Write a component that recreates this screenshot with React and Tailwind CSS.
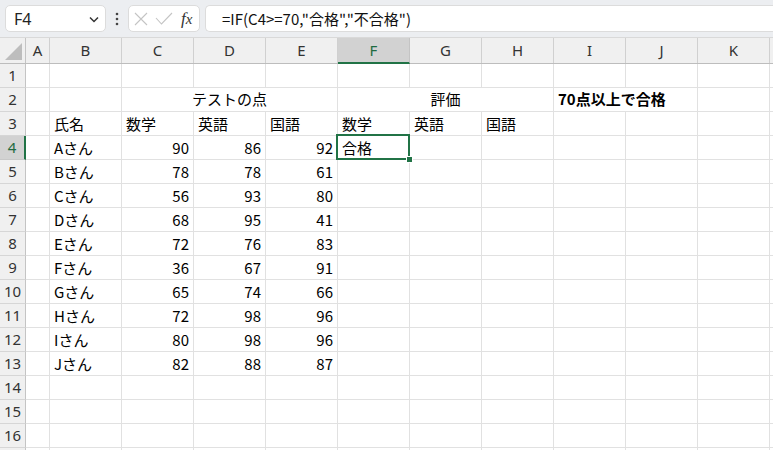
import React from "react";

const COLS = ["A", "B", "C", "D", "E", "F", "G", "H", "I", "J", "K"];
const W = { A: 24 };
const colW = (c) => (W[c] ? W[c] : 72);

const DATA = [
  ["Aさん", 90, 86, 92],
  ["Bさん", 78, 78, 61],
  ["Cさん", 56, 93, 80],
  ["Dさん", 68, 95, 41],
  ["Eさん", 72, 76, 83],
  ["Fさん", 36, 67, 91],
  ["Gさん", 65, 74, 66],
  ["Hさん", 72, 98, 96],
  ["Iさん", 80, 98, 96],
  ["Jさん", 82, 88, 87],
];

function cellsFor(r) {
  const m = {};
  if (r === 3) {
    m.B = "氏名"; m.C = "数学"; m.D = "英語"; m.E = "国語";
    m.F = "数学"; m.G = "英語"; m.H = "国語";
  }
  if (r >= 4 && r <= 13) {
    const d = DATA[r - 4];
    m.B = d[0]; m.C = d[1]; m.D = d[2]; m.E = d[3];
  }
  if (r === 4) m.F = "合格";
  return m;
}

function RowHeader({ n, selected }) {
  return (
    <div
      className={
        "w-[26px] shrink-0 h-full flex items-center justify-center border-b text-[15px] " +
        (selected
          ? "bg-[#d2d2d2] text-[#1e6b41] border-r-2 border-r-[#217346] border-b-[#c8c8c8]"
          : "bg-[#f0f0f0] text-[#333] border-r border-r-[#c4c4c4] border-b-[#d6d6d6]")
      }
    >
      {n <= 16 ? <span className="font-['Noto_Sans',sans-serif] leading-none">{n}</span> : null}
    </div>
  );
}

function Row({ r }) {
  const m = cellsFor(r);
  if (r === 2) {
    return (
      <div className="flex h-[24px]">
        <RowHeader n={r} />
        <div className="w-[24px] shrink-0 border-r border-b border-[#e1e1e1]" />
        <div className="w-[72px] shrink-0 border-r border-b border-[#e1e1e1]" />
        <div className="w-[216px] shrink-0 border-r border-b border-[#e1e1e1] flex items-center justify-center text-[15px]">
          テストの点
        </div>
        <div className="w-[216px] shrink-0 border-r border-b border-[#e1e1e1] flex items-center justify-center text-[15px]">
          評価
        </div>
        <div className="w-[144px] shrink-0 border-r border-b border-[#e1e1e1] flex items-center px-[4px] text-[15px] font-bold">
          70点以上で合格
        </div>
        <div className="w-[72px] shrink-0 border-r border-b border-[#e1e1e1]" />
        <div className="flex-1 border-b border-[#e1e1e1]" />
      </div>
    );
  }
  return (
    <div className="flex h-[24px]">
      <RowHeader n={r} selected={r === 4} />
      {COLS.map((c) => {
        const v = m[c];
        const isNum = typeof v === "number";
        const sel = r === 4 && c === "F";
        return (
          <div
            key={c}
            className={
              "shrink-0 border-r border-b border-[#e1e1e1] flex items-center px-[4px] text-[15px] " +
              (sel ? "relative z-10 " : "") +
              (isNum ? "justify-end" : "justify-start")
            }
            style={{ width: colW(c) }}
          >
            {v !== undefined ? <span className="leading-none whitespace-nowrap">{v}</span> : null}
            {sel ? (
              <>
                <div className="absolute left-[-2px] top-[-2px] right-[-1px] bottom-[-1px] border-2 border-[#217346]" />
                <div className="absolute right-[-4px] bottom-[-4px] w-[7px] h-[7px] bg-[#217346] border border-white" />
              </>
            ) : null}
          </div>
        );
      })}
      <div className="flex-1 border-b border-[#e1e1e1]" />
    </div>
  );
}

export default function App() {
  const rows = Array.from({ length: 17 }, (_, i) => i + 1);
  return (
    <div className="w-[773px] h-[450px] overflow-hidden bg-white text-black font-['Noto_Sans_CJK_JP',sans-serif]">
      {/* formula bar */}
      <div className="h-[38px] bg-[#eceef1] flex items-start pt-[5px] pl-[5px] gap-0 border-b border-[#d9d9d9]">
        <div className="w-[101px] h-[27px] bg-white rounded-[5px] border border-[#dcdcdc] flex items-center pl-[8px] pr-[6px]">
          <span className="text-[16px] text-[#222] font-['Noto_Sans',sans-serif] leading-none flex-1">F4</span>
          <svg width="10" height="7" viewBox="0 0 10 7" className="mt-[2px]">
            <path d="M1 1.5 L5 5.5 L9 1.5" fill="none" stroke="#333" strokeWidth="1.5" />
          </svg>
        </div>
        <div className="w-[22px] h-[27px] flex items-center justify-center">
          <svg width="4" height="14" viewBox="0 0 4 14">
            <circle cx="2" cy="2" r="1.3" fill="#444" />
            <circle cx="2" cy="7" r="1.3" fill="#444" />
            <circle cx="2" cy="12" r="1.3" fill="#444" />
          </svg>
        </div>
        <div className="w-[72px] h-[27px] bg-white rounded-[5px] border border-[#dcdcdc] flex items-center pl-[5px]">
          <svg width="14" height="14" viewBox="0 0 14 14">
            <path d="M1 1 L13 13 M13 1 L1 13" stroke="#c4c4c4" strokeWidth="1.1" fill="none" />
          </svg>
          <svg width="18" height="14" viewBox="0 0 18 14" className="ml-[7px]">
            <path d="M1 6 L6.5 12 L17 1" stroke="#c4c4c4" strokeWidth="1.1" fill="none" />
          </svg>
          <span className="ml-[8px] text-[17px] italic font-['Liberation_Serif',serif] text-[#333] leading-none">
            <span>f</span><span className="text-[15px]">x</span>
          </span>
        </div>
        <div className="ml-[5px] flex-1 h-[27px] bg-white rounded-l-[5px] border border-r-0 border-[#dcdcdc] flex items-center pl-[16px]">
          <span className="text-[15px] leading-none text-[#111]">=IF(C4&gt;=70,"合格","不合格")</span>
        </div>
      </div>
      {/* column headers */}
      <div className="flex h-[26px] bg-[#f0f0f0] border-b border-[#bdbdbd]">
        <div className="w-[26px] shrink-0 border-r border-[#c4c4c4] relative">
          <svg width="26" height="25" viewBox="0 0 26 25" className="absolute left-0 top-0">
            <polygon points="22,5 22,22 5,22" fill="#bdbdbd" />
          </svg>
        </div>
        {COLS.map((c) => {
          const sel = c === "F";
          return (
            <div
              key={c}
              className={
                "shrink-0 flex items-center justify-center text-[15px] font-['Noto_Sans',sans-serif] " +
                (sel
                  ? "bg-[#d2d2d2] text-[#1e6b41] border-r border-[#c4c4c4] border-b-2 border-b-[#217346] mb-[-1px]"
                  : "text-[#333] border-r border-[#d0d0d0]")
              }
              style={{ width: colW(c) }}
            >
              <span className="leading-none">{c}</span>
            </div>
          );
        })}
        <div className="flex-1" />
      </div>
      {rows.map((r) => (
        <Row key={r} r={r} />
      ))}
    </div>
  );
}
